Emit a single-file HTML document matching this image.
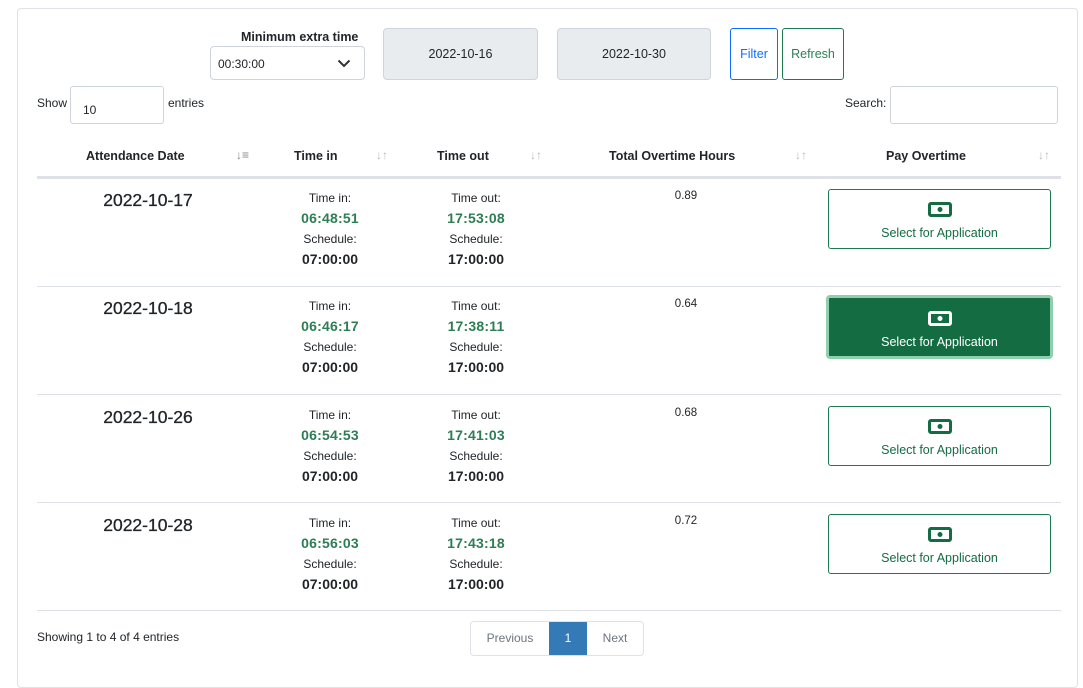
<!DOCTYPE html>
<html><head><meta charset="utf-8"><style>
*{box-sizing:border-box;margin:0;padding:0}
body{width:1083px;height:678px;background:#fff;font-family:"Liberation Sans",sans-serif;color:#212529;position:relative;overflow:hidden}
.a{position:absolute}
.card{left:17px;top:8px;width:1061px;height:680px;border:1px solid #dee2e6;border-radius:4px}
.c{text-align:center}
.lbl{font-size:12px;color:#212529}
.g{font-size:14px;color:#2e7d55;font-weight:bold;letter-spacing:0.2px}
.b{font-size:14px;font-weight:bold}
.hdr{font-size:12.5px;font-weight:bold;top:149px}
.sort{font-size:12px;color:#bbb;top:148px;font-weight:bold}
.line{left:37px;width:1024px;height:1px;background:#dee2e6}
.btn{border:1px solid #1c7a50;border-radius:3px;color:#146c43;font-size:12.5px;text-align:center}
.btn svg{display:block;margin:12px auto 9px}
.d{font-size:17.5px;-webkit-text-stroke:0.3px #212529}
</style></head><body>
<div class="a card"></div>

<div class="a b" style="left:241px;top:30px;font-size:12.5px">Minimum extra time</div>
<div class="a" style="left:210px;top:46px;width:155px;height:34px;border:1px solid #ced4da;border-radius:4px;font-size:12px;padding:10px 7px">00:30:00
<svg class="a" style="left:126px;top:12px" width="14" height="9" viewBox="0 0 14 9"><path d="M1.5 1.5 7 7 12.5 1.5" fill="none" stroke="#333" stroke-width="2"/></svg></div>
<div class="a c" style="left:383px;top:28px;width:155px;height:52px;background:#e9ecef;border:1px solid #ced4da;border-radius:4px;font-size:12.5px;line-height:50px">2022-10-16</div>
<div class="a c" style="left:557px;top:28px;width:154px;height:52px;background:#e9ecef;border:1px solid #ced4da;border-radius:4px;font-size:12.5px;line-height:50px">2022-10-30</div>
<div class="a c" style="left:730px;top:28px;width:48px;height:52px;border:1px solid #0d6efd;border-radius:3px;color:#0d6efd;font-size:12.5px;line-height:50px">Filter</div>
<div class="a c" style="left:782px;top:28px;width:62px;height:52px;border:1px solid #1c7a50;border-radius:3px;color:#2e7d55;font-size:12.5px;line-height:50px">Refresh</div>

<div class="a" style="left:37px;top:96px;font-size:12px">Show</div>
<div class="a" style="left:70px;top:86px;width:94px;height:38px;border:1px solid #ced4da;border-radius:3px;font-size:12px;padding:16px 0 0 12px">10</div>
<div class="a" style="left:168px;top:96px;font-size:12px">entries</div>
<div class="a" style="left:845px;top:96px;font-size:12px">Search:</div>
<div class="a" style="left:890px;top:86px;width:168px;height:38px;border:1px solid #ced4da;border-radius:3px"></div>

<div class="a hdr" style="left:86px">Attendance Date</div>
<div class="a sort" style="left:236px;color:#888">↓≡</div>
<div class="a hdr" style="left:294px">Time in</div>
<div class="a sort" style="left:376px">↓↑</div>
<div class="a hdr" style="left:437px">Time out</div>
<div class="a sort" style="left:530px">↓↑</div>
<div class="a hdr" style="left:609px">Total Overtime Hours</div>
<div class="a sort" style="left:795px">↓↑</div>
<div class="a hdr" style="left:886px">Pay Overtime</div>
<div class="a sort" style="left:1038px">↓↑</div>
<div class="a" style="left:37px;top:176px;width:1024px;height:3px;background:#dee2e6"></div>

<div class="a line" style="top:286px"></div>
<div class="a line" style="top:394px"></div>
<div class="a line" style="top:502px"></div>
<div class="a line" style="top:610px"></div>

<!-- row 1 -->
<div class="a c d" style="left:60px;top:190px;width:176px">2022-10-17</div>
<div class="a c" style="left:270px;top:189px;width:120px;line-height:19.5px"><div class="lbl">Time in:</div><div class="g">06:48:51</div><div class="lbl" style="margin-top:2px">Schedule:</div><div class="b">07:00:00</div></div>
<div class="a c" style="left:416px;top:189px;width:120px;line-height:19.5px"><div class="lbl">Time out:</div><div class="g">17:53:08</div><div class="lbl" style="margin-top:2px">Schedule:</div><div class="b">17:00:00</div></div>
<div class="a c" style="left:646px;top:190px;width:80px;font-size:11.5px">0.89</div>
<div class="a btn" style="left:828px;top:189px;width:223px;height:60px"><svg width="24" height="15" viewBox="0 0 24 15"><rect x="1.5" y="1.5" width="21" height="12" rx="1.5" fill="none" stroke="#146c43" stroke-width="3"/><circle cx="12" cy="7.5" r="2.5" fill="#146c43"/></svg>Select for Application</div>

<!-- row 2 -->
<div class="a c d" style="left:60px;top:298px;width:176px">2022-10-18</div>
<div class="a c" style="left:270px;top:297px;width:120px;line-height:19.5px"><div class="lbl">Time in:</div><div class="g">06:46:17</div><div class="lbl" style="margin-top:2px">Schedule:</div><div class="b">07:00:00</div></div>
<div class="a c" style="left:416px;top:297px;width:120px;line-height:19.5px"><div class="lbl">Time out:</div><div class="g">17:38:11</div><div class="lbl" style="margin-top:2px">Schedule:</div><div class="b">17:00:00</div></div>
<div class="a c" style="left:646px;top:298px;width:80px;font-size:11.5px">0.64</div>
<div class="a btn" style="left:826px;top:295px;width:227px;height:64px;background:#146c43;color:#fff;border:3px solid #8fcfae;border-radius:4px"><svg width="24" height="15" viewBox="0 0 24 15" style="margin-top:13px"><rect x="1.5" y="1.5" width="21" height="12" rx="1.5" fill="none" stroke="#fff" stroke-width="3"/><circle cx="12" cy="7.5" r="2.5" fill="#fff"/></svg>Select for Application</div>

<!-- row 3 -->
<div class="a c d" style="left:60px;top:407px;width:176px">2022-10-26</div>
<div class="a c" style="left:270px;top:406px;width:120px;line-height:19.5px"><div class="lbl">Time in:</div><div class="g">06:54:53</div><div class="lbl" style="margin-top:2px">Schedule:</div><div class="b">07:00:00</div></div>
<div class="a c" style="left:416px;top:406px;width:120px;line-height:19.5px"><div class="lbl">Time out:</div><div class="g">17:41:03</div><div class="lbl" style="margin-top:2px">Schedule:</div><div class="b">17:00:00</div></div>
<div class="a c" style="left:646px;top:407px;width:80px;font-size:11.5px">0.68</div>
<div class="a btn" style="left:828px;top:406px;width:223px;height:60px"><svg width="24" height="15" viewBox="0 0 24 15"><rect x="1.5" y="1.5" width="21" height="12" rx="1.5" fill="none" stroke="#146c43" stroke-width="3"/><circle cx="12" cy="7.5" r="2.5" fill="#146c43"/></svg>Select for Application</div>

<!-- row 4 -->
<div class="a c d" style="left:60px;top:515px;width:176px">2022-10-28</div>
<div class="a c" style="left:270px;top:514px;width:120px;line-height:19.5px"><div class="lbl">Time in:</div><div class="g">06:56:03</div><div class="lbl" style="margin-top:2px">Schedule:</div><div class="b">07:00:00</div></div>
<div class="a c" style="left:416px;top:514px;width:120px;line-height:19.5px"><div class="lbl">Time out:</div><div class="g">17:43:18</div><div class="lbl" style="margin-top:2px">Schedule:</div><div class="b">17:00:00</div></div>
<div class="a c" style="left:646px;top:515px;width:80px;font-size:11.5px">0.72</div>
<div class="a btn" style="left:828px;top:514px;width:223px;height:60px"><svg width="24" height="15" viewBox="0 0 24 15"><rect x="1.5" y="1.5" width="21" height="12" rx="1.5" fill="none" stroke="#146c43" stroke-width="3"/><circle cx="12" cy="7.5" r="2.5" fill="#146c43"/></svg>Select for Application</div>

<div class="a" style="left:37px;top:630px;font-size:12px">Showing 1 to 4 of 4 entries</div>
<div class="a" style="left:470px;top:621px;width:174px;height:35px;border:1px solid #dee2e6;border-radius:4px;overflow:hidden;font-size:12px;display:flex">
<div style="width:78px;text-align:center;line-height:33px;color:#6c757d">Previous</div>
<div style="width:38px;text-align:center;line-height:33px;background:#337ab7;color:#fff">1</div>
<div style="flex:1;text-align:center;line-height:33px;color:#6c757d">Next</div>
</div>
</body></html>
